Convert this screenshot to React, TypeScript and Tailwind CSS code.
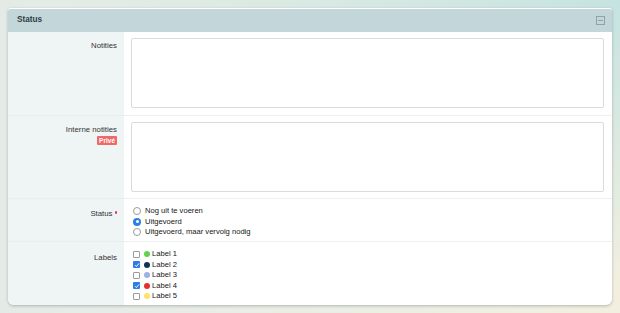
import React from "react";

const font = { fontFamily: '"Liberation Sans", Arial, sans-serif' };

function Radio({ checked, label }: { checked?: boolean; label: string }) {
  return (
    <div className="flex items-center h-[10.5px]">
      {checked ? (
        <span className="w-[8px] h-[8px] rounded-full bg-[#2b7de9] flex items-center justify-center">
          <span className="w-[3px] h-[3px] rounded-full bg-white" />
        </span>
      ) : (
        <span className="w-[8px] h-[8px] rounded-full border border-[#9b9b9b] bg-white" />
      )}
      <span className="ml-[4px] text-[7.6px] leading-[10.5px] text-[#161616]">{label}</span>
    </div>
  );
}

function Check({ checked, color, label }: { checked?: boolean; color: string; label: string }) {
  return (
    <div className="flex items-center h-[10.5px]">
      {checked ? (
        <span className="w-[7px] h-[7px] rounded-[1px] bg-[#2b7de9] flex items-center justify-center">
          <svg width="6" height="6" viewBox="0 0 6 6">
            <path d="M1 3.2 L2.4 4.6 L5 1.4" stroke="white" strokeWidth="1" fill="none" />
          </svg>
        </span>
      ) : (
        <span className="w-[7px] h-[7px] rounded-[1px] border border-[#9b9b9b] bg-white" />
      )}
      <span className="ml-[4px] w-[6px] h-[6px] rounded-full" style={{ background: color }} />
      <span className="ml-[2px] text-[7.6px] leading-[10.5px] text-[#161616]">{label}</span>
    </div>
  );
}

export default function App() {
  return (
    <div
      className="w-[620px] h-[313px] pt-[8px] px-[8px] bg-[radial-gradient(ellipse_at_100%_0%,#c5e3e1,transparent_65%),linear-gradient(to_right,#e4ebe6,#eceee4_60%,#f3efe0)]"
      style={font}
    >
      <div className="w-[604px] h-[297px] bg-white rounded-t-[3px] rounded-b-[6px] shadow-[0_1px_3px_rgba(60,80,80,0.35)] overflow-hidden flex flex-col border-t border-white">
        <div className="h-[23px] bg-[#c3d6da] flex items-center justify-between pl-[9px] pr-[7px]">
          <span className="text-[8.2px] font-bold text-[#2e3d44]">Status</span>
          <svg width="9" height="9" viewBox="0 0 9 9">
            <rect x="0.5" y="0.5" width="8" height="8" fill="none" stroke="#8ea4ab" strokeWidth="1" />
            <line x1="2" y1="4.5" x2="7" y2="4.5" stroke="#8ea4ab" strokeWidth="1" />
          </svg>
        </div>
        <div className="flex-1 flex">
          <div className="w-[116px] bg-[#eff5f5] flex flex-col text-[7.8px] leading-[10.5px] text-[#333]">
            <div className="h-[83px] pt-[9px] pr-[7px] text-right">Notities</div>
            <div className="h-[83px] pt-[9px] pr-[7px] flex flex-col items-end border-t border-[#e8eded]">
              <span>Interne notities</span>
              <span className="mt-[0.5px] bg-[#f06868] text-white font-bold text-[6.5px] leading-[9px] px-[2px] rounded-[1px]">Privé</span>
            </div>
            <div className="h-[43px] pt-[10px] pr-[7px] border-t border-[#e8eded] flex justify-end items-start">
              <span>Status</span>
              <span className="ml-[2px] mt-[2px] w-[2.5px] h-[2.5px] rounded-full bg-[#e8336d]" />
            </div>
            <div className="flex-1 pt-[11px] pr-[7px] text-right border-t border-[#e8eded]">Labels</div>
          </div>
          <div className="flex-1 flex flex-col">
            <div className="h-[83px] pt-[6px] pl-[7px] pr-[8px]">
              <div className="h-[70px] border border-[#d8dcdd] rounded-[2px] bg-white" />
            </div>
            <div className="h-[83px] pt-[6px] pl-[7px] pr-[8px] border-t border-[#eef0f0]">
              <div className="h-[70px] border border-[#d8dcdd] rounded-[2px] bg-white" />
            </div>
            <div className="h-[43px] pt-[7px] pl-[9px] border-t border-[#eef0f0] flex flex-col">
              <Radio label="Nog uit te voeren" />
              <Radio checked label="Uitgevoerd" />
              <Radio label="Uitgevoerd, maar vervolg nodig" />
            </div>
            <div className="flex-1 pt-[7px] pl-[9px] border-t border-[#eef0f0] flex flex-col">
              <Check color="#64d14d" label="Label 1" />
              <Check checked color="#0e3654" label="Label 2" />
              <Check color="#9db0e2" label="Label 3" />
              <Check checked color="#e4302e" label="Label 4" />
              <Check color="#fde36c" label="Label 5" />
            </div>
          </div>
        </div>
      </div>
    </div>
  );
}
